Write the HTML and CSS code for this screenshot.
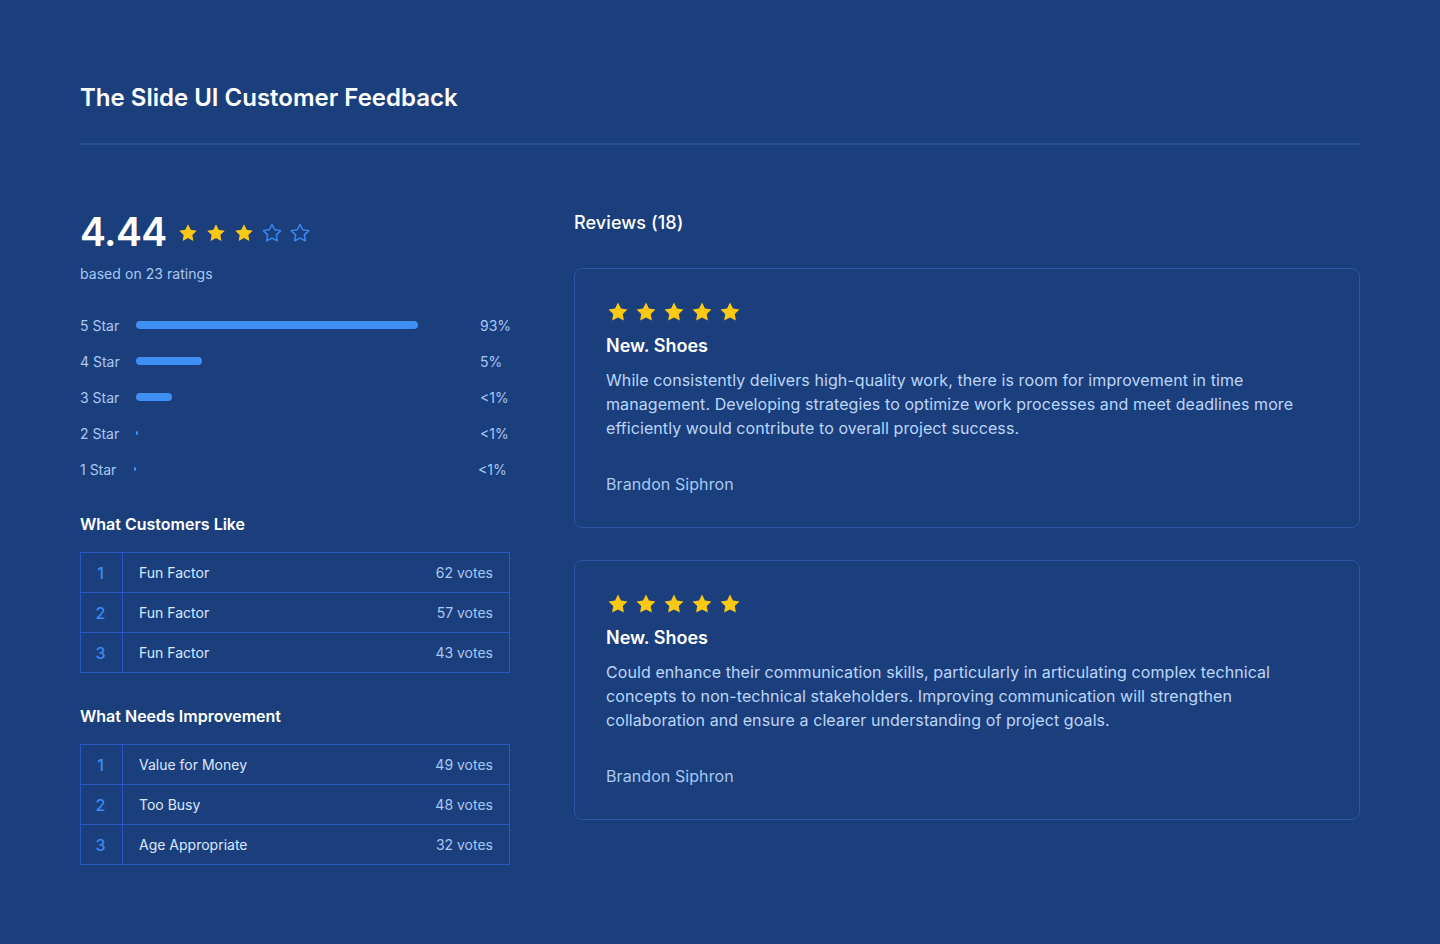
FILE: index.html
```html
<!DOCTYPE html>
<html lang="en">
<head>
<meta charset="utf-8">
<title>The Slide UI Customer Feedback</title>
<link rel="stylesheet" href="styles.css">
</head>
<body>
<svg width="0" height="0" class="defs" aria-hidden="true">
  <defs>
    <path id="star" d="M12 2.5l2.94 5.96 6.58.96-4.76 4.64 1.12 6.55L12 17.52l-5.88 3.09 1.12-6.55-4.76-4.64 6.58-.96z"/>
  </defs>
</svg>
<main class="page">
  <h1 class="title">The Slide UI Customer Feedback</h1>
  <hr class="divider">
  <div class="columns">
    <section class="left">
      <div class="score-row">
        <span class="score">4.44</span>
        <span class="stars small">
          <svg viewBox="0 0 24 24"><use href="#star" class="full"/></svg>
          <svg viewBox="0 0 24 24"><use href="#star" class="full"/></svg>
          <svg viewBox="0 0 24 24"><use href="#star" class="full"/></svg>
          <svg viewBox="0 0 24 24"><use href="#star" class="empty"/></svg>
          <svg viewBox="0 0 24 24"><use href="#star" class="empty"/></svg>
        </span>
      </div>
      <p class="based">based on 23 ratings</p>
      <ul class="dist">
        <li><span class="lbl">5 Star</span><span class="track"><span class="bar" style="width:282px"></span></span><span class="pct">93%</span></li>
        <li><span class="lbl">4 Star</span><span class="track"><span class="bar" style="width:66px"></span></span><span class="pct">5%</span></li>
        <li><span class="lbl">3 Star</span><span class="track"><span class="bar" style="width:36px"></span></span><span class="pct">&lt;1%</span></li>
        <li><span class="lbl">2 Star</span><span class="track"><span class="bar tiny" style="width:2px"></span></span><span class="pct">&lt;1%</span></li>
        <li><span class="lbl">1 Star</span><span class="track shift"><span class="bar tiny" style="width:2px"></span></span><span class="pct">&lt;1%</span></li>
      </ul>

      <h2 class="sub">What Customers Like</h2>
      <table class="votes">
        <tr><td class="n">1</td><td class="name">Fun Factor</td><td class="v">62 votes</td></tr>
        <tr><td class="n">2</td><td class="name">Fun Factor</td><td class="v">57 votes</td></tr>
        <tr><td class="n">3</td><td class="name">Fun Factor</td><td class="v">43 votes</td></tr>
      </table>

      <h2 class="sub second">What Needs Improvement</h2>
      <table class="votes">
        <tr><td class="n">1</td><td class="name">Value for Money</td><td class="v">49 votes</td></tr>
        <tr><td class="n">2</td><td class="name">Too Busy</td><td class="v">48 votes</td></tr>
        <tr><td class="n">3</td><td class="name">Age Appropriate</td><td class="v">32 votes</td></tr>
      </table>
    </section>

    <section class="right">
      <h2 class="reviews-title">Reviews (18)</h2>
      <article class="card">
        <span class="stars big">
          <svg viewBox="0 0 24 24"><use href="#star" class="full"/></svg>
          <svg viewBox="0 0 24 24"><use href="#star" class="full"/></svg>
          <svg viewBox="0 0 24 24"><use href="#star" class="full"/></svg>
          <svg viewBox="0 0 24 24"><use href="#star" class="full"/></svg>
          <svg viewBox="0 0 24 24"><use href="#star" class="full"/></svg>
        </span>
        <h3 class="card-title">New. Shoes</h3>
        <p class="card-body">While consistently delivers high-quality work, there is room for improvement in time management. Developing strategies to optimize work processes and meet deadlines more efficiently would contribute to overall project success.</p>
        <p class="author">Brandon Siphron</p>
      </article>
      <article class="card">
        <span class="stars big">
          <svg viewBox="0 0 24 24"><use href="#star" class="full"/></svg>
          <svg viewBox="0 0 24 24"><use href="#star" class="full"/></svg>
          <svg viewBox="0 0 24 24"><use href="#star" class="full"/></svg>
          <svg viewBox="0 0 24 24"><use href="#star" class="full"/></svg>
          <svg viewBox="0 0 24 24"><use href="#star" class="full"/></svg>
        </span>
        <h3 class="card-title">New. Shoes</h3>
        <p class="card-body">Could enhance their communication skills, particularly in articulating complex technical concepts to non-technical stakeholders. Improving communication will strengthen collaboration and ensure a clearer understanding of project goals.</p>
        <p class="author">Brandon Siphron</p>
      </article>
    </section>
  </div>
</main>
</body>
</html>
```

FILE: styles.css
```css
* { box-sizing: border-box; }
html, body { margin: 0; padding: 0; }
body {
  background: #1b3f7c;
  font-family: Inter, "Noto Sans", "Liberation Sans", sans-serif;
  color: #bfd7fb;
  min-height: 944px;
}
.defs { position: absolute; width: 0; height: 0; overflow: hidden; }
.page { padding: 82px 80px 0; }
.title {
  margin: 0;
  font-size: 24px;
  line-height: 32px;
  font-weight: 600;
  color: #ffffff;
  letter-spacing: 0;
}
.divider {
  margin: 29px 0 0;
  border: 0;
  border-top: 2px solid #24508f;
  height: 0;
}
.columns {
  display: flex;
  gap: 64px;
  margin-top: 63px;
}
.left { width: 430px; flex: none; }
.right { flex: 1; }

.score-row { display: flex; align-items: center; gap: 10px; height: 48px; }
.score {
  font-size: 39px;
  line-height: 48px;
  font-weight: 600;
  color: #ffffff;
  letter-spacing: -0.6px;
}
.stars { display: flex; }
.stars svg { display: block; }
.stars.small { gap: 6px; margin-top: 1px; }
.stars.small svg { width: 22px; height: 22px; }
.stars.big { gap: 4px; }
.stars.big svg { width: 24px; height: 24px; }
.full { fill: #fbc814; }
.empty { fill: none; stroke: #3b88f2; stroke-width: 1.6; stroke-linejoin: round; }

.based { margin: 8px 0 0; font-size: 14px; line-height: 20px; color: #a9c8f3; letter-spacing: 0.05px; }

.dist { list-style: none; margin: 23px 0 0; padding: 0; }
.dist li { display: flex; align-items: center; height: 36px; font-size: 14px; color: #a9c8f3; }
.lbl { width: 56px; flex: none; }
.track { width: 344px; flex: none; display: flex; }
.track.shift { margin-left: -2px; }
.bar { display: block; height: 8px; border-radius: 4px; background: #3f8ef3; }
.bar.tiny { height: 4px; border-radius: 1px; }
.pct { flex: none; }

.sub {
  margin: 25px 0 0;
  font-size: 16px;
  line-height: 24px;
  font-weight: 600;
  color: #ffffff;
}
.sub.second { margin-top: 31px; }

.votes {
  margin-top: 16px;
  width: 430px;
  border-collapse: collapse;
  font-size: 14px;
}
.votes td {
  height: 40px;
  border-top: 1px solid #2b58c0;
  border-bottom: 1px solid #2b58c0;
  padding: 0;
}
.votes .n {
  width: 42px;
  text-align: center;
  color: #3b8cf3;
  font-size: 16px;
  font-weight: 500;
  border-left: 1px solid #2b58c0;
  border-right: 1px solid #2b58c0;
  padding-right: 2px;
}
.votes .name { padding-left: 16px; color: #dbe8fd; }
.votes .v {
  text-align: right;
  padding-right: 16px;
  color: #a9c8f3;
  border-right: 1px solid #2b58c0;
}

.reviews-title {
  margin: 0;
  padding-top: 1px;
  font-size: 18px;
  line-height: 28px;
  font-weight: 500;
  color: #ffffff;
  letter-spacing: 0.1px;
}
.card {
  margin-top: 31px;
  border: 1px solid #2a56a4;
  border-radius: 8px;
  padding: 31px 31px 31px;
  height: 260px;
}
.card + .card { margin-top: 32px; }
.card-title {
  margin: 10px 0 0;
  font-size: 18px;
  line-height: 24px;
  font-weight: 600;
  color: #ffffff;
}
.card-body {
  margin: 10px 0 0;
  font-size: 16px;
  line-height: 24px;
  color: #bcd6fb;
  max-width: 700px;
  letter-spacing: 0.08px;
}
.author {
  margin: 32px 0 0;
  font-size: 16px;
  line-height: 24px;
  color: #a9c8f3;
  letter-spacing: 0.08px;
}
```
